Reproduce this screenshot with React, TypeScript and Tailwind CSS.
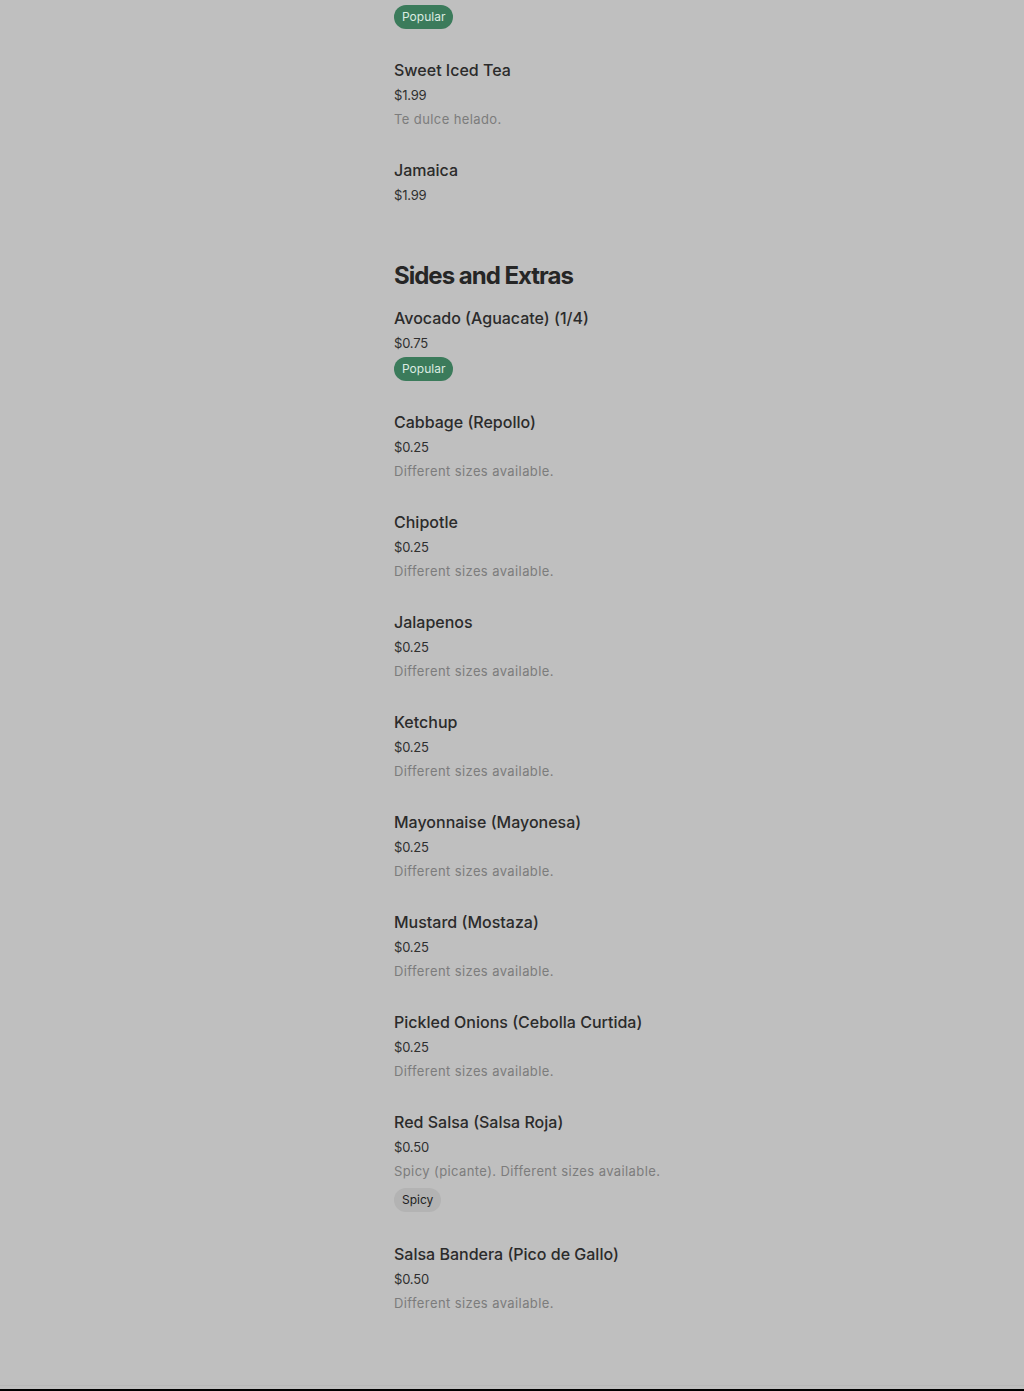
import React from 'react';

type Item = {
  name: string;
  price: string;
  description?: string;
  badge?: 'Popular' | 'Spicy';
};

const drinks: Item[] = [
  { name: 'Horchata', price: '$1.99', badge: 'Popular' },
  { name: 'Sweet Iced Tea', price: '$1.99', description: 'Te dulce helado.' },
  { name: 'Jamaica', price: '$1.99' },
];

const sides: Item[] = [
  { name: 'Avocado (Aguacate) (1/4)', price: '$0.75', badge: 'Popular' },
  { name: 'Cabbage (Repollo)', price: '$0.25', description: 'Different sizes available.' },
  { name: 'Chipotle', price: '$0.25', description: 'Different sizes available.' },
  { name: 'Jalapenos', price: '$0.25', description: 'Different sizes available.' },
  { name: 'Ketchup', price: '$0.25', description: 'Different sizes available.' },
  { name: 'Mayonnaise (Mayonesa)', price: '$0.25', description: 'Different sizes available.' },
  { name: 'Mustard (Mostaza)', price: '$0.25', description: 'Different sizes available.' },
  { name: 'Pickled Onions (Cebolla Curtida)', price: '$0.25', description: 'Different sizes available.' },
  {
    name: 'Red Salsa (Salsa Roja)',
    price: '$0.50',
    description: 'Spicy (picante). Different sizes available.',
    badge: 'Spicy',
  },
  { name: 'Salsa Bandera (Pico de Gallo)', price: '$0.50', description: 'Different sizes available.' },
];

function MenuItem({ item }: { item: Item }) {
  return (
    <div className="flex flex-col items-start pb-[27px]">
      <h3 className="text-[16px] leading-6 font-medium text-[#2b2b2b]">{item.name}</h3>
      <p className="mt-px text-[13px] leading-6 tracking-[-0.2px] text-[#2f2f2f]">{item.price}</p>
      {item.description && (
        <p className="text-[13px] leading-6 tracking-[0.4px] text-[#7c7c7c]">{item.description}</p>
      )}
      {item.badge === 'Popular' && (
        <span className="mt-[2px] mb-[2px] h-6 px-2 rounded-full bg-[#3b7b5b] text-[12px] leading-6 text-[#dcebe1]">
          Popular
        </span>
      )}
      {item.badge === 'Spicy' && (
        <span className="mt-[5px] mb-[3px] h-6 px-2 rounded-full bg-[#b3b3b3] text-[12px] leading-6 text-[#222]">
          Spicy
        </span>
      )}
    </div>
  );
}

export default function App() {
  return (
    <div
      className="min-h-[1391px] w-full bg-[#bfbfbf] flex flex-col overflow-hidden"
      style={{ fontFamily: 'Inter, "Noto Sans", sans-serif' }}
    >
      <div className="flex-1 pl-[394px] mt-[-46px]">
        <section>
          {drinks.map((item) => (
            <MenuItem key={item.name} item={item} />
          ))}
        </section>

        <section className="mt-[28px]">
          <h2 className="text-[24px] leading-7 font-bold tracking-[-1px] text-[#262626] mb-4">
            Sides and Extras
          </h2>
          {sides.map((item) => (
            <MenuItem key={item.name} item={item} />
          ))}
        </section>
      </div>
      <div className="h-px bg-[#b8b8b8] mb-[3px]" />
      <div className="h-[2px] bg-black" />
    </div>
  );
}
